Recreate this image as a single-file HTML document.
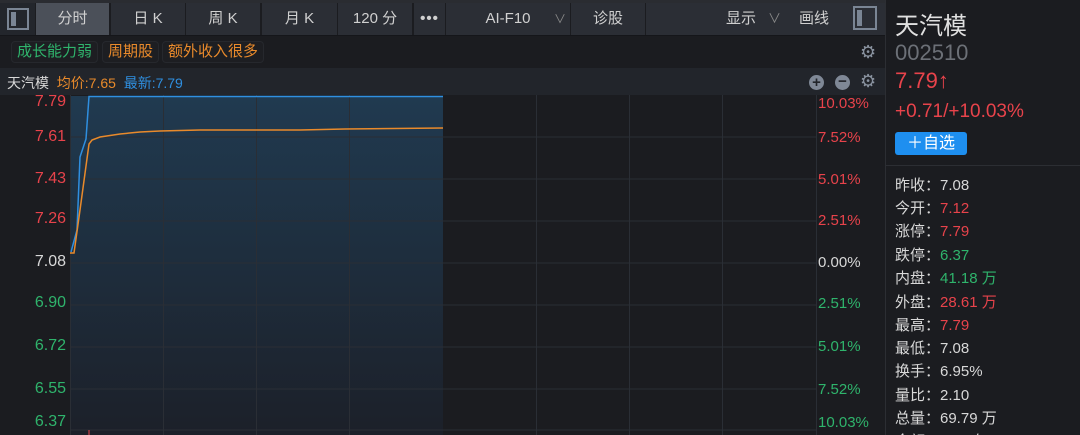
<!DOCTYPE html>
<html style="width:1080px;height:435px;overflow:hidden"><head><meta charset="utf-8"><style>
*{margin:0;padding:0;box-sizing:border-box}
body{width:1080px;height:435px;background:#1b1c20;font-family:"Liberation Sans","Noto Sans CJK SC",sans-serif;overflow:hidden;position:relative;color:#d8d8d8}
.a{position:absolute}
.tab{position:absolute;top:3px;height:32px;background:#2b2e35;color:#d0d0d0;font-size:15px;line-height:32px;text-align:center}
.tag{position:absolute;top:41px;height:22px;border:1px solid #26282d;border-radius:4px;font-size:15px;line-height:20px;padding:0 5px;background:#1d1e22}
.yl{position:absolute;right:1014px;font-size:16px;text-align:right}
.yr{position:absolute;left:818px;font-size:15px}
.info{position:absolute;left:895px;font-size:15px;color:#d8d8d8}
.r{color:#e8434b}.g{color:#2fb46c}
</style></head><body>
<div class="a" style="left:0;top:0;width:885px;height:3px;background:#2a2c31"></div>
<div class="tab" style="left:0;width:35px;background:#23262c"><div class="a" style="left:7px;top:5px;width:22px;height:22px;border:2px solid #7a8594"><div class="a" style="left:2px;top:2px;width:5px;height:14px;background:#7a8594"></div></div></div>
<div class="tab" style="left:36px;width:73px;background:#4b5059">分时</div>
<div class="tab" style="left:111px;width:74px">日 K</div>
<div class="tab" style="left:186px;width:74px">周 K</div>
<div class="tab" style="left:262px;width:75px">月 K</div>
<div class="tab" style="left:338px;width:74px">120 分</div>
<div class="tab" style="left:414px;width:31px;letter-spacing:1px;font-weight:bold">•••</div>
<div class="tab" style="left:446px;width:124px">AI-F10<span class="a" style="left:108px;color:#888;font-size:12px">∨</span></div>
<div class="tab" style="left:571px;width:74px">诊股</div>
<div class="tab" style="left:646px;width:239px;text-align:left"><span class="a" style="left:80px">显示</span><span class="a" style="left:122px;color:#888;font-size:13px">∨</span><span class="a" style="left:153px">画线</span><div class="a" style="left:207px;top:3px;width:24px;height:24px;border:2px solid #7a8594"><div class="a" style="left:2px;top:2px;width:5px;height:16px;background:#7a8594"></div></div></div>
<div class="a" style="left:0;top:35px;width:885px;height:1px;background:#15161a"></div>
<div class="tag g" style="left:11px">成长能力弱</div>
<div class="tag" style="left:102px;color:#e98a2b">周期股</div>
<div class="tag" style="left:162px;color:#e98a2b">额外收入很多</div>
<div class="a" style="left:860px;top:42px;color:#8a93a0;font-size:18px">⚙</div>
<div class="a" style="left:0;top:68px;width:885px;height:27px;background:#22252b"></div>
<div class="a" style="left:7px;top:73px;font-size:14px"><span style="color:#d8d8d8">天汽模</span> <span style="color:#e98a2b">&nbsp;均价:7.65</span> <span style="color:#2f8fe0">&nbsp;最新:7.79</span></div>
<div class="a" style="left:809px;top:75px;width:15px;height:15px;border-radius:50%;background:#7f8896;color:#22252b;font-size:15px;line-height:15px;text-align:center;font-weight:bold">+</div>
<div class="a" style="left:835px;top:75px;width:15px;height:15px;border-radius:50%;background:#7f8896;color:#22252b;font-size:15px;line-height:14px;text-align:center;font-weight:bold">−</div>
<div class="a" style="left:860px;top:71px;color:#8a93a0;font-size:18px">⚙</div>
<svg class="a" style="left:0;top:95px" width="885" height="340">
<defs><linearGradient id="f" x1="0" y1="0" x2="0" y2="1"><stop offset="0" stop-color="#203a50"/><stop offset="1" stop-color="#1c2029"/></linearGradient></defs>
<rect x="70" y="0" width="746" height="340" fill="#1b1c20"/>
<rect x="70" y="1" width="373" height="340" fill="url(#f)"/>
<g stroke="#2a2e35" stroke-width="1">
<line x1="70" y1="42" x2="816" y2="42"/><line x1="70" y1="84" x2="816" y2="84"/><line x1="70" y1="126" x2="816" y2="126"/><line x1="70" y1="168" x2="816" y2="168"/><line x1="70" y1="210" x2="816" y2="210"/><line x1="70" y1="252" x2="816" y2="252"/><line x1="70" y1="294" x2="816" y2="294"/><line x1="70" y1="335" x2="816" y2="335"/>
<line x1="70.5" y1="0" x2="70.5" y2="340"/><line x1="163.5" y1="0" x2="163.5" y2="340"/><line x1="256.5" y1="0" x2="256.5" y2="340"/><line x1="349.5" y1="0" x2="349.5" y2="340"/><line x1="536.5" y1="0" x2="536.5" y2="340"/><line x1="629.5" y1="0" x2="629.5" y2="340"/><line x1="722.5" y1="0" x2="722.5" y2="340"/><line x1="816.5" y1="0" x2="816.5" y2="340"/>
</g>
<polyline fill="none" stroke="#2f8fe0" stroke-width="1.5" points="71,157 77,135 80,62 86,44 89,1.5 443,1.5"/>
<polyline fill="none" stroke="#e98a2b" stroke-width="1.5" points="70,158 74,158 80,115 89,49 92,45 100,42 120,39 140,37 160,36 200,35 300,35 345,34 443,33"/>
<line x1="89" y1="335" x2="89" y2="340" stroke="#e8434b"/>
</svg>
<div class="yl r" style="top:93px">7.79</div>
<div class="yl r" style="top:128px">7.61</div>
<div class="yl r" style="top:170px">7.43</div>
<div class="yl r" style="top:210px">7.26</div>
<div class="yl" style="top:253px">7.08</div>
<div class="yl g" style="top:294px">6.90</div>
<div class="yl g" style="top:337px">6.72</div>
<div class="yl g" style="top:380px">6.55</div>
<div class="yl g" style="top:413px">6.37</div>
<div class="yr r" style="top:95px">10.03%</div>
<div class="yr r" style="top:129px">7.52%</div>
<div class="yr r" style="top:171px">5.01%</div>
<div class="yr r" style="top:212px">2.51%</div>
<div class="yr" style="top:254px">0.00%</div>
<div class="yr g" style="top:295px">2.51%</div>
<div class="yr g" style="top:338px">5.01%</div>
<div class="yr g" style="top:381px">7.52%</div>
<div class="yr g" style="top:414px">10.03%</div>
<div class="a" style="left:885px;top:0;width:1px;height:435px;background:#2c2e33"></div>
<div class="a" style="left:895px;top:6px;font-size:24px;color:#e0e0e0">天汽模</div>
<div class="a" style="left:895px;top:40px;font-size:22px;color:#6c7077">002510</div>
<div class="a r" style="left:895px;top:68px;font-size:22px">7.79↑</div>
<div class="a r" style="left:895px;top:101px;font-size:19px">+0.71/+10.03%</div>
<div class="a" style="left:895px;top:132px;width:72px;height:23px;background:#1e8ff0;border-radius:3px;color:#fff;font-size:16px;line-height:23px;text-align:center">＋自选</div>
<div class="a" style="left:886px;top:165px;width:194px;height:1px;background:#2c2e33"></div>
<div class="info" style="top:174px">昨收：7.08</div>
<div class="info" style="top:197px">今开：<span class="r">7.12</span></div>
<div class="info" style="top:220px">涨停：<span class="r">7.79</span></div>
<div class="info" style="top:244px">跌停：<span class="g">6.37</span></div>
<div class="info" style="top:267px">内盘：<span class="g">41.18 万</span></div>
<div class="info" style="top:291px">外盘：<span class="r">28.61 万</span></div>
<div class="info" style="top:314px">最高：<span class="r">7.79</span></div>
<div class="info" style="top:337px">最低：7.08</div>
<div class="info" style="top:360px">换手：6.95%</div>
<div class="info" style="top:384px">量比：2.10</div>
<div class="info" style="top:407px">总量：69.79 万</div>
<div class="info" style="top:430px">金额：5.34 亿</div>
</body></html>
